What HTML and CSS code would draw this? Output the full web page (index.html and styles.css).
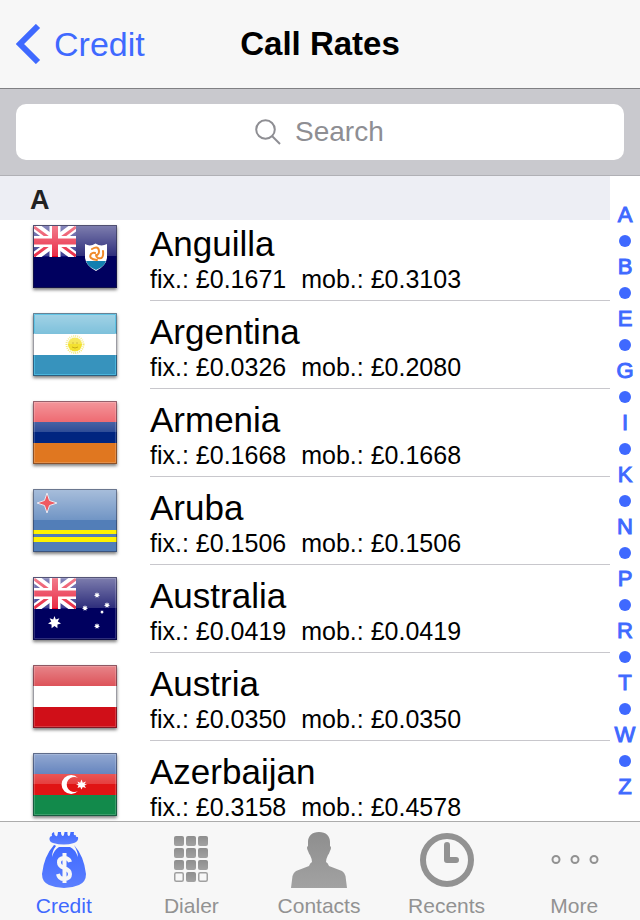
FILE: index.html
```html
<!DOCTYPE html>
<html lang="en">
<head>
<meta charset="utf-8">
<meta name="viewport" content="width=device-width, initial-scale=1">
<title>Call Rates</title>
<link rel="stylesheet" href="styles.css">
</head>
<body>
<svg class="defs" aria-hidden="true">
  <defs>
    <linearGradient id="gloss" x1="0" y1="0" x2="0" y2="1">
      <stop offset="0" stop-color="#fff" stop-opacity=".5"/>
      <stop offset="1" stop-color="#fff" stop-opacity=".18"/>
    </linearGradient>
    <linearGradient id="blue" x1="0" y1="0" x2="0" y2="1">
      <stop offset="0" stop-color="#3f69ff"/>
      <stop offset="1" stop-color="#5c80ff"/>
    </linearGradient>
    <linearGradient id="gray" x1="0" y1="0" x2="0" y2="1">
      <stop offset="0" stop-color="#8e8e8e"/>
      <stop offset="1" stop-color="#a2a2a2"/>
    </linearGradient>
    <symbol id="shine" viewBox="0 0 84 63">
      <path d="M0 0H84V31H0Z" fill="url(#gloss)"/>
      <path d="M1.500 1.500H82.500V61.500H1.500Z" fill="none" stroke="#fff" stroke-opacity=".18"/>
      <path d="M.5 .5H83.500V62.500H.5Z" fill="none" stroke="#223" stroke-opacity=".45"/>
    </symbol>
    <symbol id="jack" viewBox="0 0 42 31">
      <path d="M0 0H42V31H0Z" fill="#14147a"/>
      <path d="M0 0L42 31M42 0L0 31" stroke="#fff" stroke-width="9"/>
      <path d="M0 1L19 15M42 30L23 16M42 1L23 15M0 30L19 16" stroke="#e5001f" stroke-width="3"/>
      <path d="M21 0V31M0 15.500H42" stroke="#fff" stroke-width="11"/>
      <path d="M21 0V31M0 15.500H42" stroke="#e5001f" stroke-width="6"/>
    </symbol>
    <symbol id="star" viewBox="-10 -10 20 20">
      <path d="M0-10L2-4.500 7.500-6.500 5-1.500 10 1.500 4.500 3 4.500 9 0 5.500-4.500 9-4.500 3-10 1.500-5-1.500-7.500-6.500-2-4.500Z" fill="#fff"/>
    </symbol>
  </defs>
</svg>

<header class="nav">
  <a class="back" href="#credit">
    <svg width="25" height="40" viewBox="0 0 25 40" aria-hidden="true"><path d="M22 2L4 20 22 38" fill="none" stroke="#3f69ff" stroke-width="6"/></svg>
    Credit
  </a>
  <h1>Call Rates</h1>
</header>

<form class="searchbar" role="search">
  <label class="field">
    <svg width="26" height="26" viewBox="0 0 26 26" aria-hidden="true"><g fill="none" stroke="#8e8e93" stroke-width="2"><circle cx="10.500" cy="10.500" r="9.300"/><path d="M17 17L25 25"/></g></svg>
    <input type="text" placeholder="Search" aria-label="Search">
  </label>
</form>

<main class="content">
  <section class="list">
    <h2>A</h2>
    <ul>
      <li>
        <svg class="flag" viewBox="0 0 84 63" role="img" aria-label="Flag of Anguilla">
          <path d="M0 0H84V63H0Z" fill="#00005f"/>
          <use href="#jack" x="1" y="1" width="42" height="31"/>
          <path d="M0 0H84V31H0Z" fill="url(#gloss)"/>
          <path d="M52 19Q57 22 62.500 18.500 68 22 74 19V33Q73 41 63 46 53 41 52 33Z" fill="#fff"/>
          <path d="M53 36H73Q71 42 63 45 55 42 53 36Z" fill="#137fb0"/>
          <g fill="none" stroke="#f08a2b" stroke-width="2" stroke-linecap="round"><path d="M59 24Q66 20 66 27 66 29 64 30"/><path d="M70 26Q71 35 65 33 63 32 63 30"/><path d="M64 35Q55 34 58 29 60 27 62 28"/></g>
          <path d="M.5 .5H83.500V62.500H.5Z" fill="none" stroke="#223" stroke-opacity=".5"/>
        </svg>
        <div class="rate"><h3>Anguilla</h3><p><span>fix.: £0.1671</span> <span>mob.: £0.3103</span></p></div>
      </li>
      <li>
        <svg class="flag" viewBox="0 0 84 63" role="img" aria-label="Flag of Argentina">
          <path d="M0 0H84V21H0Z" fill="#4aa8cd"/><path d="M0 21H84V42H0Z" fill="#fff"/><path d="M0 42H84V63H0Z" fill="#3793bd"/>
          <circle cx="42" cy="31.500" r="8.500" fill="none" stroke="#f2e878" stroke-width="2" stroke-dasharray="1 1"/>
          <circle cx="42" cy="31.500" r="7" fill="#f3e12f"/>
          <path d="M39 30H41M43 30H45M39 34Q42 36 45 34" fill="none" stroke="#c8ac18"/>
          <use href="#shine" width="84" height="63"/>
          <path d="M1.500 1.500H82.500V20M82.500 43V61.500H1.500V43M1.500 20V1.500" fill="none" stroke="#42bce4" stroke-opacity=".7"/>
        </svg>
        <div class="rate"><h3>Argentina</h3><p><span>fix.: £0.0326</span> <span>mob.: £0.2080</span></p></div>
      </li>
      <li>
        <svg class="flag" viewBox="0 0 84 63" role="img" aria-label="Flag of Armenia">
          <path d="M0 0H84V21H0Z" fill="#e8303a"/><path d="M0 21H84V42H0Z" fill="#002580"/><path d="M0 42H84V63H0Z" fill="#e07720"/>
          <use href="#shine" width="84" height="63"/>
        </svg>
        <div class="rate"><h3>Armenia</h3><p><span>fix.: £0.1668</span> <span>mob.: £0.1668</span></p></div>
      </li>
      <li>
        <svg class="flag" viewBox="0 0 84 63" role="img" aria-label="Flag of Aruba">
          <path d="M0 0H84V63H0Z" fill="#527eb8"/>
          <path d="M0 41H84V45H0ZM0 48H84V53H0Z" fill="#fff200"/>
          <path d="M0 0H84V31H0Z" fill="url(#gloss)"/>
          <path d="M14 4L16.500 11.500 24 14 16.500 16.500 14 24 11.500 16.500 4 14 11.500 11.500Z" fill="#f05a62" stroke="#e6e8f2"/>
          <path d="M.5 .5H83.500V62.500H.5Z" fill="none" stroke="#223" stroke-opacity=".45"/>
        </svg>
        <div class="rate"><h3>Aruba</h3><p><span>fix.: £0.1506</span> <span>mob.: £0.1506</span></p></div>
      </li>
      <li>
        <svg class="flag" viewBox="0 0 84 63" role="img" aria-label="Flag of Australia">
          <path d="M0 0H84V63H0Z" fill="#00005f"/>
          <use href="#jack" x="1" y="1" width="42" height="31"/>
          <use href="#star" x="15" y="39" width="13" height="13"/>
          <use href="#shine" width="84" height="63"/>
          <use href="#star" x="61" y="15" width="6" height="6"/>
          <use href="#star" x="71" y="25" width="6" height="6"/>
          <use href="#star" x="49" y="28" width="6" height="6"/>
          <use href="#star" x="61" y="46" width="6" height="6"/>
          <use href="#star" x="67" y="33" width="4" height="4"/>
        </svg>
        <div class="rate"><h3>Australia</h3><p><span>fix.: £0.0419</span> <span>mob.: £0.0419</span></p></div>
      </li>
      <li>
        <svg class="flag" viewBox="0 0 84 63" role="img" aria-label="Flag of Austria">
          <path d="M0 0H84V63H0Z" fill="#d00f18"/><path d="M0 21H84V42H0Z" fill="#fff"/>
          <use href="#shine" width="84" height="63"/>
        </svg>
        <div class="rate"><h3>Austria</h3><p><span>fix.: £0.0350</span> <span>mob.: £0.0350</span></p></div>
      </li>
      <li>
        <svg class="flag" viewBox="0 0 84 63" role="img" aria-label="Flag of Azerbaijan">
          <path d="M0 0H84V21H0Z" fill="#2a55a5"/><path d="M0 21H84V42H0Z" fill="#e01414"/><path d="M0 42H84V63H0Z" fill="#128a4b"/>
          <use href="#shine" width="84" height="63"/>
          <path d="M45 25A9.500 9.500 0 1 0 45 38A7.500 7.500 0 1 1 45 25Z" fill="#fff"/>
          <path d="M48.500 26.500L49.800 29.700 53 28.500 51.500 31 54 31.500 51.500 32.500 53 35 49.800 34 48.500 36.500 47.200 34 44.500 35 45.500 32.500 43 31.500 45.500 31 44.500 28.500 47.200 29.700Z" fill="#fff"/>
        </svg>
        <div class="rate"><h3>Azerbaijan</h3><p><span>fix.: £0.3158</span> <span>mob.: £0.4578</span></p></div>
      </li>
    </ul>
  </section>
  <nav class="index" aria-label="Alphabet">
    <a href="#A">A</a><i></i><a href="#B">B</a><i></i><a href="#E">E</a><i></i><a href="#G">G</a><i></i><a href="#I">I</a><i></i><a href="#K">K</a><i></i><a href="#N">N</a><i></i><a href="#P">P</a><i></i><a href="#R">R</a><i></i><a href="#T">T</a><i></i><a href="#W">W</a><i></i><a href="#Z">Z</a>
  </nav>
</main>

<nav class="tabs" aria-label="Sections">
  <a class="active" href="#credit">
    <svg viewBox="0 0 56 56" aria-hidden="true">
      <path d="M17 11Q13 10 13.500 6 14 4 16 4 15 1 18 0 18 3 20 4 21 5 21.500 3L22 0H25Q25 4 27 4 28 4 28.500 0H31.500Q31 4 33 4 34 4 34.500 0H38Q37 4 40 3 39 5 42 5 43 9 38 11 28 14 17 11Z" fill="url(#blue)"/>
      <path d="M18 13Q8 24 6 42 6 50 13 53 20 56 28 56 36 56 43 53 50 50 50 42 48 24 38 13 42 20 42 25 39 17 34 15H23Q18 18 16 25 16 19 20 14 19 13 18 13Z" fill="url(#blue)"/>
      <path d="M34 30Q33 26 28 26 23 26 23 30.500 23 34 28 36 34 38 34 42 34 47 28 47 23 47 22 42M28.500 21V51" fill="none" stroke="#f7f7f7" stroke-width="4"/>
    </svg>
    Credit
  </a>
  <a href="#dialer">
    <svg viewBox="0 0 56 56" aria-hidden="true">
      <g fill="url(#gray)"><rect x="11" y="4" width="10" height="10" rx="2"/><rect x="23" y="4" width="10" height="10" rx="2"/><rect x="35" y="4" width="10" height="10" rx="2"/><rect x="11" y="16" width="10" height="10" rx="2"/><rect x="23" y="16" width="10" height="10" rx="2"/><rect x="35" y="16" width="10" height="10" rx="2"/><rect x="11" y="28" width="10" height="10" rx="2"/><rect x="23" y="28" width="10" height="10" rx="2"/><rect x="35" y="28" width="10" height="10" rx="2"/><rect x="23" y="40" width="10" height="10" rx="2"/></g>
      <g fill="none" stroke="#a0a0a0" stroke-width="1.500"><rect x="11.750" y="40.750" width="8.500" height="8.500" rx="1.500"/><rect x="35.750" y="40.750" width="8.500" height="8.500" rx="1.500"/></g>
    </svg>
    Dialer
  </a>
  <a href="#contacts">
    <svg viewBox="0 0 56 56" aria-hidden="true"><path d="M28 0C35 0 39 4 39 10V14Q41 15 39 19 38 22 37 23 35 27 35 30 37 31 38 34L51 39Q54 41 54.500 44L56 56H0L1.500 44Q2 41 5 39L18 34Q19 31 21 30 21 27 19 23 18 22 17 19 15 15 17 14V10C17 4 21 0 28 0Z" fill="url(#gray)"/></svg>
    Contacts
  </a>
  <a href="#recents">
    <svg viewBox="0 0 56 56" aria-hidden="true"><g fill="none" stroke="#929292" stroke-width="6"><circle cx="28" cy="28" r="24"/><path d="M28 13V28H37" stroke-linecap="round" stroke-linejoin="round"/></g></svg>
    Recents
  </a>
  <a href="#more">
    <svg viewBox="0 0 56 56" aria-hidden="true"><g fill="none" stroke="#929292" stroke-width="2"><circle cx="10" cy="27.500" r="3.500"/><circle cx="29" cy="27.500" r="3.500"/><circle cx="48" cy="27.500" r="3.500"/></g></svg>
    More
  </a>
</nav>
</body>
</html>
```
FILE: styles.css
```css
* { box-sizing: border-box; }

body {
  margin: 0;
  height: 100vh;
  display: flex;
  flex-direction: column;
  background: #fff;
  color: #000;
  font-family: "Liberation Sans", Arial, sans-serif;
}

h1, h2, h3, p, ul { margin: 0; padding: 0; }
a { color: #3f69ff; text-decoration: none; }
svg { flex: none; }

.defs { position: absolute; width: 0; height: 0; }

.nav {
  flex: none;
  display: grid;
  grid-template-columns: 1fr auto 1fr;
  align-items: center;
  padding: 24px 16px;
  background: #f7f7f7;
  border-bottom: 1px solid #808083;
}

.nav h1 { font-size: 33px; line-height: 40px; }

.back {
  display: flex;
  align-items: center;
  gap: 13px;
  font-size: 34px;
  line-height: 40px;
}

.searchbar {
  flex: none;
  padding: 15px 16px;
  background: #c9c9ce;
  border-bottom: 1px solid #b0b0b5;
}

.field {
  display: flex;
  justify-content: center;
  align-items: center;
  gap: 14px;
  height: 56px;
  background: #fff;
  border-radius: 10px;
}

.field input {
  width: 90px;
  padding: 0;
  border: 0;
  outline: 0;
  background: none;
  font: 28px "Liberation Sans", Arial, sans-serif;
}

.field input::placeholder { color: #8e8e93; opacity: 1; }

.content {
  flex: 1;
  min-height: 0;
  display: grid;
  grid-template-columns: 1fr 30px;
  overflow: hidden;
}

.list { min-height: 0; overflow: hidden; }

.list h2 {
  padding: 4px 30px 0;
  background: #edeef4;
  color: #222;
  font-size: 27px;
  line-height: 40px;
}

/* The first row is scrolled slightly under the section heading. */
.list ul { margin-top: -7px; list-style: none; }

.list li {
  display: flex;
  gap: 33px;
  padding-left: 33px;
}

.flag {
  width: 84px;
  height: 63px;
  margin-top: 12px;
  box-shadow: 0 2px 3px rgba(0, 0, 0, .5);
}

.rate {
  flex: 1;
  padding: 11px 0 6px;
  border-bottom: 1px solid #c8c7cc;
}

.rate h3 {
  font-size: 35px;
  font-weight: 400;
  line-height: 40px;
}

.rate p {
  display: flex;
  gap: 15px;
  font-size: 25px;
  line-height: 30px;
}

.index {
  display: flex;
  flex-direction: column;
  align-items: center;
  justify-content: center;
  padding-top: 4px;
}

.index a {
  font-size: 22px;
  line-height: 26px;
  -webkit-text-stroke: 1px #3f69ff;
}

.index i {
  width: 12px;
  height: 12px;
  margin: 7px 0;
  border-radius: 50%;
  background: #3f69ff;
}

.tabs {
  flex: none;
  display: grid;
  grid-template-columns: repeat(5, 1fr);
  padding: 10px 2px 2px 0;
  background: #f7f7f7;
  border-top: 1px solid #acacac;
}

.tabs a {
  display: flex;
  flex-direction: column;
  align-items: center;
  gap: 6px;
  color: #929292;
  font-size: 21px;
  line-height: 24px;
}

.tabs .active { color: #3f69ff; }
.tabs svg { width: 56px; height: 56px; }
```
